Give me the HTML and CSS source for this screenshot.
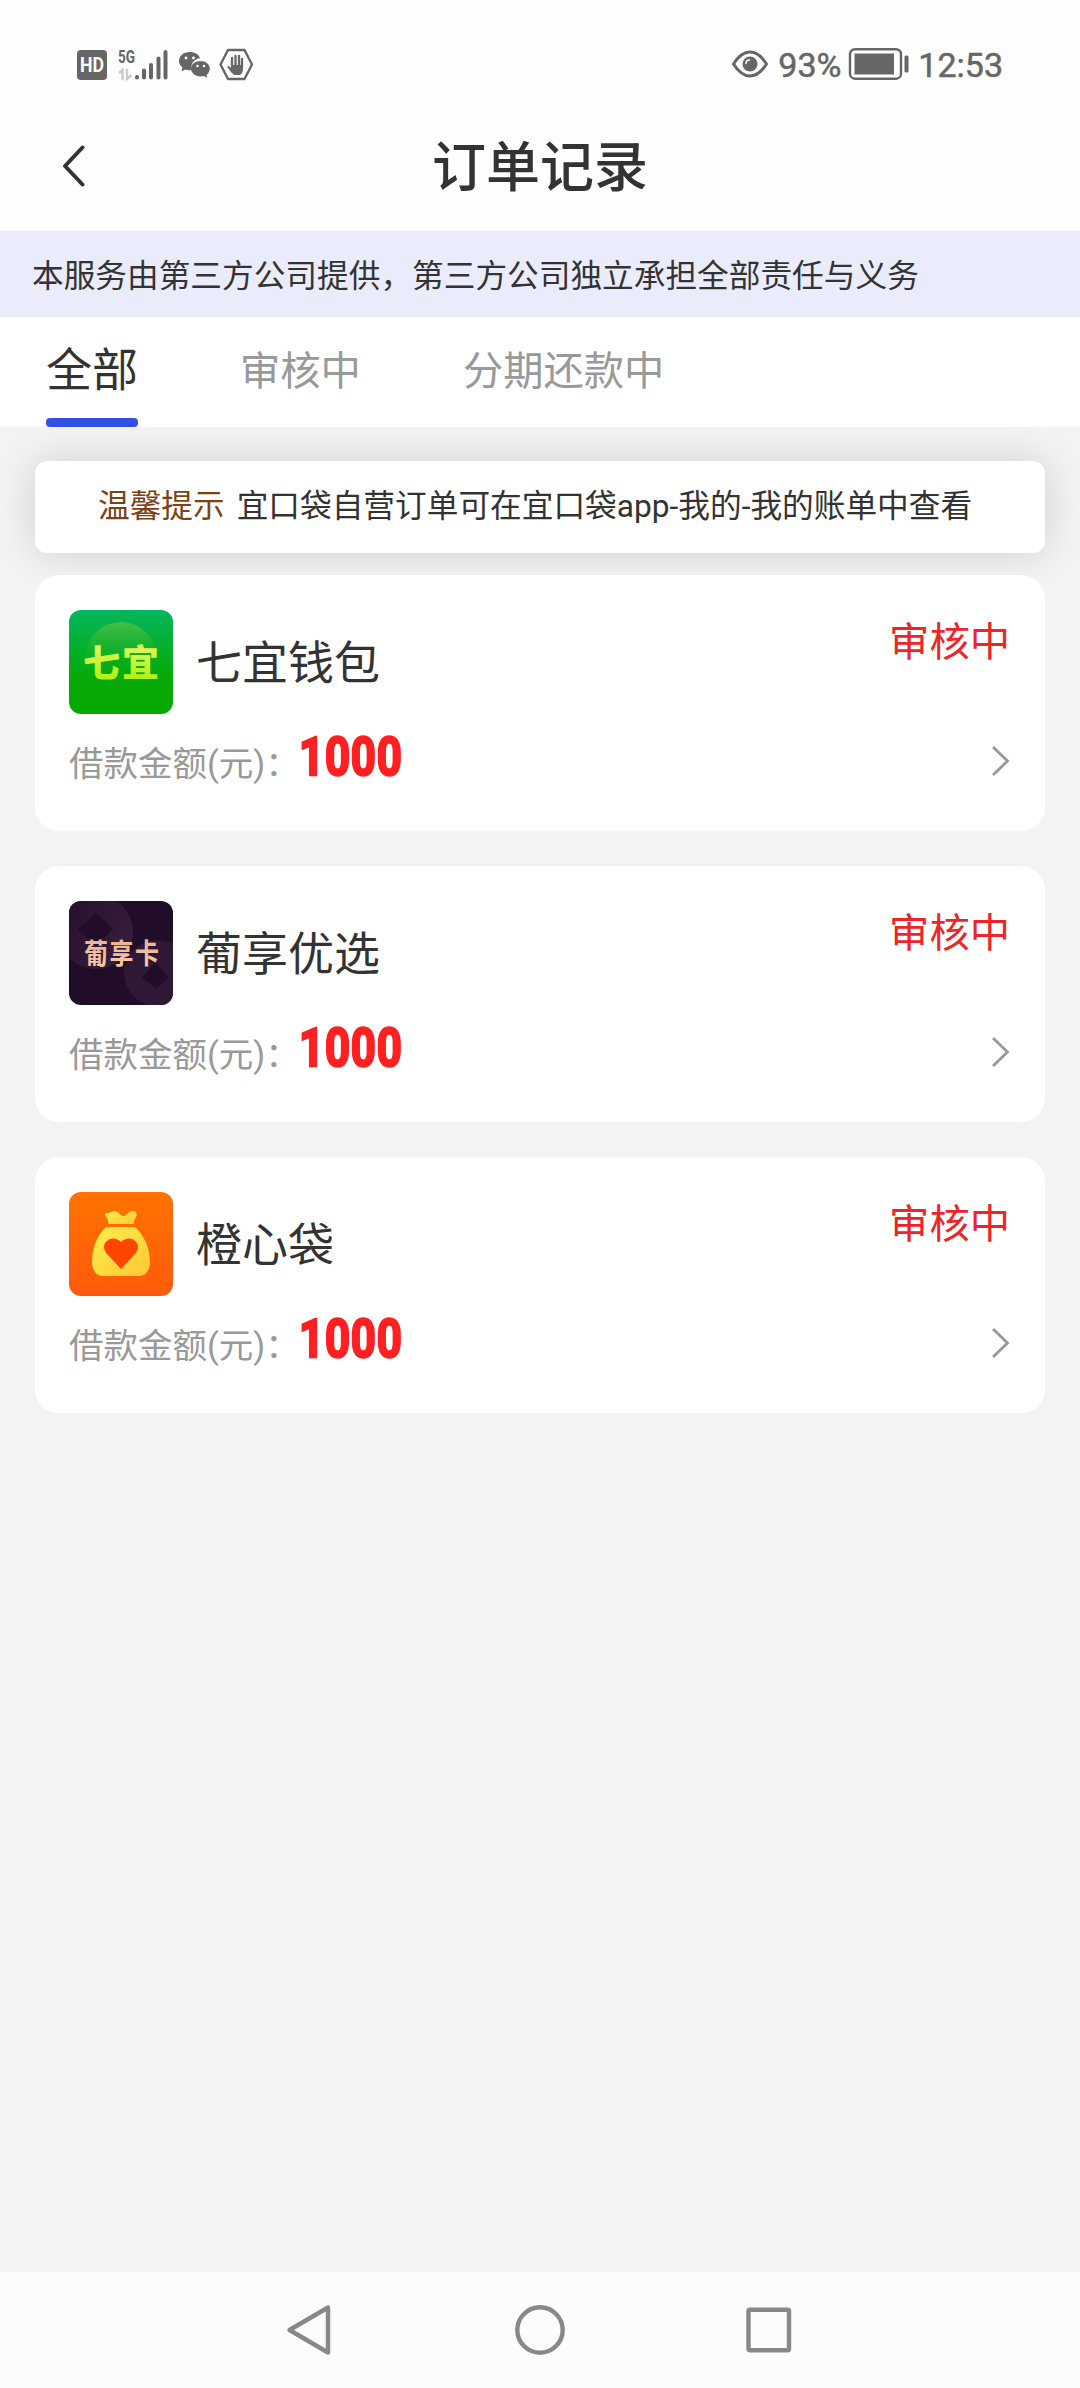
FILE: index.html
```html
<!DOCTYPE html>
<html lang="zh-CN">
<head>
<meta charset="utf-8">
<title>订单记录</title>
<link rel="stylesheet" href="styles.css">
</head>
<body>
<div class="screen">
  <div class="statusbar">
    <svg class="signals" width="180" height="36" viewBox="75 46 180 36">
      <rect x="77" y="50" width="30" height="30" rx="4" fill="#666"/>
      <text class="hd" x="80" y="72" textLength="24" lengthAdjust="spacingAndGlyphs">HD</text>
      <text class="net" x="118" y="62.500" textLength="17" lengthAdjust="spacingAndGlyphs">5G</text>
      <path d="M119 73l3.500-3v10M127 69v10l4.500-4" fill="none" stroke="#ccc" stroke-width="2.500"/>
      <path d="M137 77v.500M144 70.500v7M151 65v12.500M158.500 58.500v19M165.500 52v25.500" stroke="#666" stroke-width="4" stroke-linecap="round"/>
      <path d="M189.500 52c-6 0-10.500 4-10.500 9 0 3 1.500 5 3.500 6.500l-1 4 4-2c2 .6 4 .8 6 .5-1.500-6 3-11.500 8.500-11.800-1-3.700-5-6.200-10.500-6.200z" fill="#666"/>
      <path d="M200.500 61c-5.500 0-9.500 3.500-9.500 7.500s4 8 9.500 8c1.200 0 2.300-.2 3.400-.5l3.400 2-.8-3c2-1.500 3.300-4 3.300-6.500 0-4-4-7.500-9.300-7.500z" fill="#666"/>
      <g fill="#fff"><circle cx="186" cy="58" r="1.400"/><circle cx="193.500" cy="58" r="1.400"/><circle cx="197.500" cy="66" r="1.200"/><circle cx="204" cy="66" r="1.200"/></g>
      <path d="M228 50h16.500l7.500 14.500-7.500 14.500H228l-7.500-14.500z" fill="none" stroke="#666" stroke-width="2.400" stroke-linejoin="round"/>
      <path d="M232 58v10M235.500 56v10M239 56v10M242 59v9" stroke="#666" stroke-width="2.300" stroke-linecap="round"/>
      <path d="M231 65h12v4c0 3-1.500 5.500-3 6h-5.500c-3-1.500-5-5-7.500-8.500 1-1.200 2.500-.5 4 1.500z" fill="#666"/>
    </svg>
    <div class="sysinfo">
      <svg width="38" height="32" viewBox="732 48 38 32">
        <path d="M734.500 64c5-8 11-12 16.500-12s11.500 4 16.500 12c-5 8-11 12-16.500 12s-11.500-4-16.500-12z" fill="none" stroke="#666" stroke-width="3"/>
        <circle cx="751" cy="64" r="7.500" fill="#666"/>
        <path d="M747 63.500c0-2 1.500-3.500 3.500-3.500" fill="none" stroke="#fff" stroke-width="1.500" stroke-linecap="round"/>
      </svg>
      <span class="percent">93%</span>
      <svg width="62" height="34" viewBox="848 48 62 34">
        <rect x="850" y="50.200" width="51" height="29.500" rx="5" fill="none" stroke="#666" stroke-width="2.400"/>
        <rect x="854.500" y="54.500" width="39.500" height="21" fill="#666"/>
        <rect x="904.500" y="56.500" width="4" height="17" rx="1.500" fill="#666"/>
      </svg>
      <span class="clock">12:53</span>
    </div>
  </div>

  <header class="titlebar">
    <svg class="back" width="26" height="46" viewBox="0 0 26 46"><path d="M23.500 4.500L6 23l17.500 18.500" fill="none" stroke="#333" stroke-width="4" stroke-linecap="round" stroke-linejoin="round"/></svg>
    <h1>订单记录</h1>
  </header>

  <div class="banner">本服务由第三方公司提供，第三方公司独立承担全部责任与义务</div>

  <nav class="tabs">
    <span class="tab active">全部</span>
    <span class="tab">审核中</span>
    <span class="tab">分期还款中</span>
  </nav>

  <main>
    <div class="tip"><span class="tip-label">温馨提示</span><span>宜口袋自营订单可在宜口袋app-我的-我的账单中查看</span></div>

    <section class="card">
      <div class="head">
        <svg class="logo" viewBox="0 0 104 104">
          <defs>
            <linearGradient id="green" x2="0" y2="1"><stop offset="0" stop-color="#03b75c"/><stop offset=".65" stop-color="#06aa08"/><stop offset="1" stop-color="#06a802"/></linearGradient>
            <linearGradient id="glow" x2="0" y2="1"><stop offset="0" stop-color="#45bd4b"/><stop offset=".7" stop-color="#0cab0c" stop-opacity="0"/></linearGradient>
            <linearGradient id="lime" x2="0" y2="1"><stop offset="0" stop-color="#f0f77a"/><stop offset="1" stop-color="#a6f000"/></linearGradient>
          </defs>
          <rect width="104" height="104" fill="url(#green)"/>
          <circle cx="52" cy="48" r="36" fill="url(#glow)"/>
          <text class="logo-green" x="14" y="66.500" textLength="76" fill="url(#lime)">七宜</text>
        </svg>
        <span class="name">七宜钱包</span>
        <span class="state">审核中</span>
      </div>
      <div class="foot">
        <span class="label">借款金额(元)：</span><span class="amount">1000</span>
        <svg class="more" width="20" height="32" viewBox="0 0 20 32"><path d="M3 2l14.500 14L3 30" fill="none" stroke="#999" stroke-width="2.800"/></svg>
      </div>
    </section>

    <section class="card">
      <div class="head">
        <svg class="logo" viewBox="0 0 104 104">
          <defs>
            <linearGradient id="gold" x2="0" y2="1"><stop offset="0" stop-color="#e8ae8b"/><stop offset="1" stop-color="#f7cdac"/></linearGradient>
            <linearGradient id="coin" x2="1" y2=".6"><stop offset="0" stop-color="#230f2a"/><stop offset="1" stop-color="#371e3c"/></linearGradient>
          </defs>
          <rect width="104" height="104" fill="#210d28"/>
          <circle cx="27" cy="31" r="37" fill="url(#coin)"/>
          <path d="M27 12l17 16-17 17L9 28z" fill="#210d28"/>
          <circle cx="88" cy="72" r="33" fill="#2f1836"/>
          <path d="M86 62l14 14-13 12-14-12z" fill="#210d28"/>
          <text class="logo-gold" x="15" y="0" textLength="75" transform="translate(0 63) scale(1 1.200)" fill="url(#gold)">葡享卡</text>
        </svg>
        <span class="name">葡享优选</span>
        <span class="state">审核中</span>
      </div>
      <div class="foot">
        <span class="label">借款金额(元)：</span><span class="amount">1000</span>
        <svg class="more" width="20" height="32" viewBox="0 0 20 32"><path d="M3 2l14.500 14L3 30" fill="none" stroke="#999" stroke-width="2.800"/></svg>
      </div>
    </section>

    <section class="card">
      <div class="head">
        <svg class="logo" viewBox="0 0 104 104">
          <defs>
            <linearGradient id="orange" x2="0" y2="1"><stop offset="0" stop-color="#ff7300"/><stop offset="1" stop-color="#ff5a0c"/></linearGradient>
            <linearGradient id="bag" x2="1" y2="1"><stop offset="0" stop-color="#ffef4a"/><stop offset="1" stop-color="#ffc735"/></linearGradient>
          </defs>
          <rect width="104" height="104" fill="url(#orange)"/>
          <path d="M39 32c1-3-1-6-2.500-8-1.500-2 0-3 2-3 3 0 4-2 7-2 4 0 6 5 9 5s5-5 9-5c3 0 5 2 4 5-1 3-3 4-2.500 8z" fill="url(#bag)"/>
          <path d="M37 35h29c8 7 15 20 15 35 0 8-4 14-11 14H34c-7 0-11-6-11-14 0-15 6-28 14-35z" fill="url(#bag)"/>
          <path d="M52 77L38 62c-4-5-4-10 0-13 4-4 10-3 14 1 4-4 10-5 14-1 4 4 4 8 0 13z" fill="#ff4600"/>
        </svg>
        <span class="name">橙心袋</span>
        <span class="state">审核中</span>
      </div>
      <div class="foot">
        <span class="label">借款金额(元)：</span><span class="amount">1000</span>
        <svg class="more" width="20" height="32" viewBox="0 0 20 32"><path d="M3 2l14.500 14L3 30" fill="none" stroke="#999" stroke-width="2.800"/></svg>
      </div>
    </section>
  </main>

  <footer class="sysnav">
    <svg width="52" height="56" viewBox="0 0 52 56"><path d="M43 5.500v45L4.500 28z" fill="none" stroke="#888" stroke-width="4.400" stroke-linejoin="round"/></svg>
    <svg width="56" height="56" viewBox="0 0 56 56"><circle cx="28" cy="28" r="22.700" fill="none" stroke="#888" stroke-width="4.400"/></svg>
    <svg width="52" height="56" viewBox="0 0 52 56"><rect x="5.500" y="7.800" width="40.500" height="40.500" rx="1.500" fill="none" stroke="#888" stroke-width="4.400"/></svg>
  </footer>
</div>
</body>
</html>
```
FILE: styles.css
```css
* { box-sizing: border-box; }

body {
  margin: 0;
  background: #f3f3f3;
  color: #333;
  font-family: Roboto, "Noto Sans CJK SC", sans-serif;
}

svg { display: block; flex: none; }

.screen {
  display: flex;
  flex-direction: column;
  height: 2388px;
}

.statusbar {
  display: flex;
  justify-content: space-between;
  height: 104px;
  padding: 46px 77px 0 75px;
  background: #fefefe;
  color: #666;
}

.hd { font: 700 20px Roboto, sans-serif; fill: #fff; }
.net { font: 700 18px Roboto, sans-serif; fill: #666; }

.sysinfo {
  display: flex;
  align-items: center;
  height: 36px;
  font-size: 34px;
  line-height: 36px;
  -webkit-text-stroke: .5px #666;
}

.percent { width: 63px; margin: 2px 7px 0 9px; }
.clock { margin: 2px 0 0 8px; }

.titlebar {
  display: grid;
  grid-template-columns: 60px 1fr 60px;
  align-items: center;
  height: 127px;
  padding: 0 0 4px;
  background: #fefefe;
}

.back { margin-left: 59px; }

h1 {
  margin: 0;
  padding-top: 6px;
  text-align: center;
  font-size: 54px;
  font-weight: 500;
  line-height: 70px;
}

.banner {
  height: 86px;
  padding-left: 32px;
  background: #eaecfc;
  font-size: 31.680px;
  line-height: 91px;
  white-space: nowrap;
}

.tabs {
  display: flex;
  gap: 102px;
  height: 110px;
  padding-left: 46px;
  background: #fff;
}

.tab {
  color: #999;
  font-size: 40.300px;
  line-height: 109px;
}

.active {
  display: flex;
  flex-direction: column;
  color: #333;
  font-size: 46px;
  line-height: 106px;
}

.active::after {
  content: "";
  flex: none;
  height: 9px;
  margin-top: -5px;
  border-radius: 4px;
  background: #324fe6;
}

main {
  flex: 1;
  padding: 34px 35px 0;
}

.tip {
  display: flex;
  gap: 12px;
  height: 92px;
  margin-bottom: 22px;
  padding-left: 63px;
  border-radius: 12px;
  background: #fff;
  box-shadow: 0 0 40px rgba(0, 0, 0, .15);
  font-size: 31.680px;
  line-height: 91px;
  white-space: nowrap;
}

.tip-label { color: #7b4213; }

.card {
  position: relative;
  height: 256px;
  margin-bottom: 35px;
  padding: 35px 35px 0 34px;
  border-radius: 24px;
  background: #fff;
}

.head { display: flex; height: 104px; }

.logo { width: 104px; height: 104px; border-radius: 12px; }
.logo-green { font: 900 37px "Noto Sans CJK SC", sans-serif; }
.logo-gold { font: 700 24px "Noto Sans CJK SC", sans-serif; }

.name {
  flex: 1;
  margin-left: 23px;
  font-size: 46px;
  line-height: 107px;
}

.state {
  color: #ee2528;
  font-size: 40.300px;
  line-height: 65px;
}

.foot {
  display: flex;
  align-items: center;
  height: 94px;
}

.label { color: #999; font-size: 34.500px; white-space: nowrap; }

.amount {
  width: 100px;
  margin: -9px 0 0 -1px;
  color: #ff2021;
  font-size: 54px;
  font-weight: 700;
  letter-spacing: 1px;
  line-height: 60px;
  -webkit-text-stroke: 2.500px #ff2021;
  transform: scaleX(.81);
  transform-origin: left;
}

.more { margin-left: auto; }

.sysnav {
  display: flex;
  justify-content: space-between;
  height: 116px;
  padding: 30px 285px 0;
  background: #fcfcfc;
}
```
